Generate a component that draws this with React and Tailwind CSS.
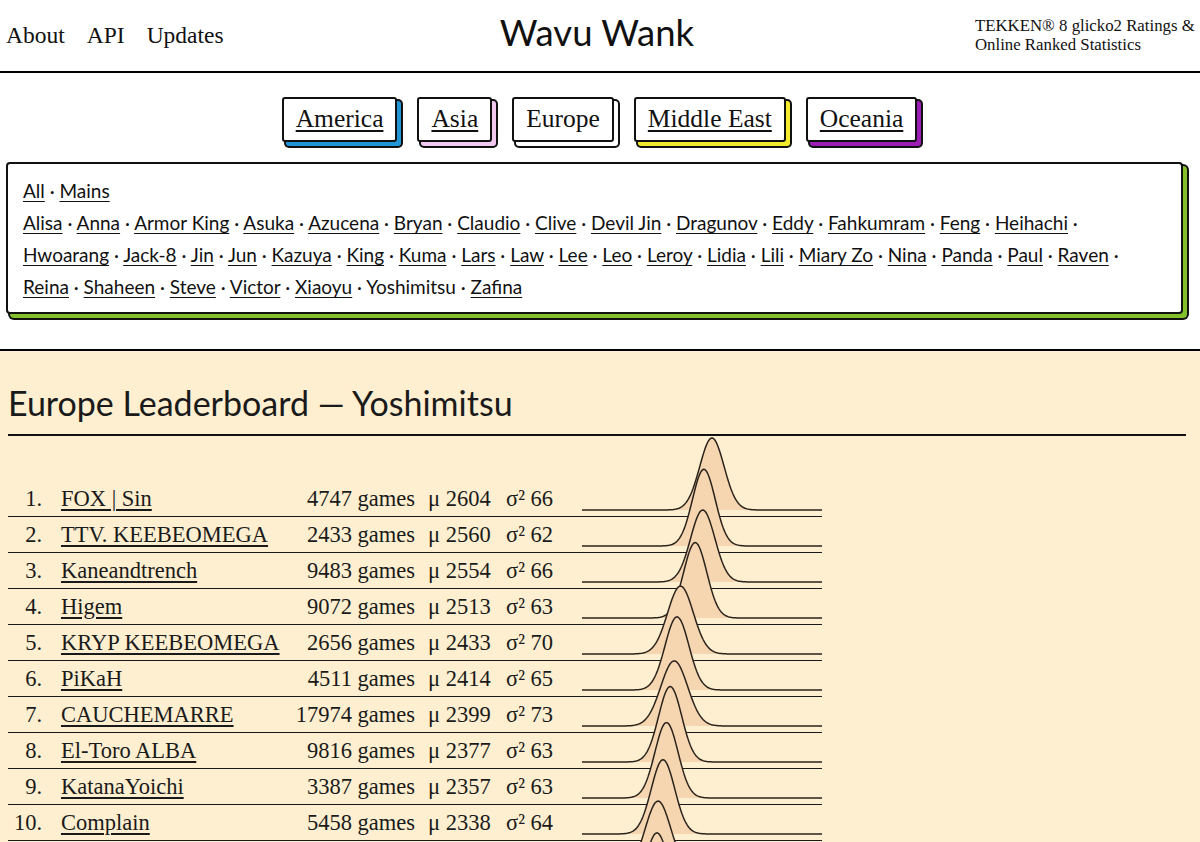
import React from 'react';

const serif = { fontFamily: '"Liberation Serif", "DejaVu Serif", serif' };
const sans = { fontFamily: 'Lato, "Open Sans", sans-serif' };

const regions = [
  { name: 'America', shadow: 'shadow-[4px_4px_0_0_#2196d6,4px_4px_0_2px_#111]', link: true },
  { name: 'Asia', shadow: 'shadow-[4px_4px_0_0_#f0c8f0,4px_4px_0_2px_#111]', link: true },
  { name: 'Europe', shadow: 'shadow-[4px_4px_0_0_#ffffff,4px_4px_0_2px_#111]', link: false },
  { name: 'Middle East', shadow: 'shadow-[4px_4px_0_0_#f4ea2e,4px_4px_0_2px_#111]', link: true },
  { name: 'Oceania', shadow: 'shadow-[4px_4px_0_0_#9b1db5,4px_4px_0_2px_#111]', link: true },
];

const charLines = [
  ['All', 'Mains'],
  ['Alisa', 'Anna', 'Armor King', 'Asuka', 'Azucena', 'Bryan', 'Claudio', 'Clive', 'Devil Jin', 'Dragunov', 'Eddy', 'Fahkumram', 'Feng', 'Heihachi', ''],
  ['Hwoarang', 'Jack-8', 'Jin', 'Jun', 'Kazuya', 'King', 'Kuma', 'Lars', 'Law', 'Lee', 'Leo', 'Leroy', 'Lidia', 'Lili', 'Miary Zo', 'Nina', 'Panda', 'Paul', 'Raven', ''],
  ['Reina', 'Shaheen', 'Steve', 'Victor', 'Xiaoyu', 'Yoshimitsu', 'Zafina'],
];

const players = [
  { name: 'FOX | Sin', games: 4747, mu: 2604, sigma: 66 },
  { name: 'TTV. KEEBEOMEGA', games: 2433, mu: 2560, sigma: 62 },
  { name: 'Kaneandtrench', games: 9483, mu: 2554, sigma: 66 },
  { name: 'Higem', games: 9072, mu: 2513, sigma: 63 },
  { name: 'KRYP KEEBEOMEGA', games: 2656, mu: 2433, sigma: 70 },
  { name: 'PiKaH', games: 4511, mu: 2414, sigma: 65 },
  { name: 'CAUCHEMARRE', games: 17974, mu: 2399, sigma: 73 },
  { name: 'El-Toro ALBA', games: 9816, mu: 2377, sigma: 63 },
  { name: 'KatanaYoichi', games: 3387, mu: 2357, sigma: 63 },
  { name: 'Complain', games: 5458, mu: 2338, sigma: 64 },
  { name: 'Yoshi Main', games: 6120, mu: 2311, sigma: 69 },
  { name: 'Manji', games: 3904, mu: 2305, sigma: 65 },
];

// ridgeline curve for one row, baseline sits 7px above the row's bottom rule
function Ridge({ mu, sigma }) {
  const base = 29;
  const cx = 81 + (mu - 2338) * 0.184;
  const s = sigma * 0.184;
  const h = 4752 / sigma;
  const pts = [];
  for (let x = 0; x <= 240; x += 1) {
    const y = base - h * Math.exp(-0.5 * ((x - cx) / s) ** 2);
    pts.push(`${x},${y.toFixed(2)}`);
  }
  const line = 'M' + pts.join(' L');
  return (
    <svg width="240" height="36" viewBox="0 0 240 36" className="block overflow-visible">
      <path d={`${line} L240,${base} L0,${base} Z`} fill="#f6d5b1" />
      <path d={line} fill="none" stroke="#2b241c" strokeWidth="1.5" />
    </svg>
  );
}

function Header() {
  return (
    <header className="grid grid-cols-[1fr_auto_1fr] items-center h-[73px] border-b-2 border-black bg-white text-[#111]">
      <nav className="flex gap-[22px] pl-[6px] text-[23.5px]" style={serif}>
        <a>About</a>
        <a>API</a>
        <a>Updates</a>
      </nav>
      <div className="text-[36.5px] leading-none pb-[6px] pr-[6px]" style={sans}>Wavu Wank</div>
      <div className="flex justify-end pr-[5px]">
        <p className="text-[16.8px] leading-[19px] w-[220px] pb-[2px]" style={serif}>
          TEKKEN® 8 glicko2 Ratings &amp; Online Ranked Statistics
        </p>
      </div>
    </header>
  );
}

function RegionTabs() {
  return (
    <div className="flex justify-center gap-[20px] pt-[24px] pr-[1px]" style={serif}>
      {regions.map((r) => (
        <div
          key={r.name}
          className={`h-[45px] px-[12px] flex items-center bg-white border-2 border-[#111] rounded-[3px] text-[25.5px] text-[#111] ${r.shadow}`}
        >
          <span className={r.link ? 'underline underline-offset-[3px] decoration-[1.5px]' : ''}>{r.name}</span>
        </div>
      ))}
    </div>
  );
}

function CharacterBox() {
  return (
    <div className="ml-[6px] mr-[17px] mt-[20px] bg-white border-2 border-[#111] rounded-[4px] shadow-[4px_4px_0_0_#84bf2c,4px_4px_0_2px_#111] pl-[15px] pt-[11px] pb-[9px] text-[19px] leading-[32px] text-[#111]" style={sans}>
      {charLines.map((line, i) => (
        <div key={i} className="whitespace-nowrap">
          {line.map((c, j) => (
            <React.Fragment key={j}>
              {j > 0 && <span> · </span>}
              {c === 'Yoshimitsu' ? (
                <span>{c}</span>
              ) : (
                c && <a className="underline underline-offset-[3px]">{c}</a>
              )}
            </React.Fragment>
          ))}
        </div>
      ))}
    </div>
  );
}

function Leaderboard() {
  return (
    <section className="mt-[35px] border-t-2 border-black bg-[#fdefd0] pl-[8px] pr-[14px] pb-[40px] text-[#1a1a1a]">
      <h2 className="pt-[32px] pb-[11px] border-b-2 border-[#111] text-[34px] leading-[40px]" style={sans}>
        Europe Leaderboard — Yoshimitsu
      </h2>
      <ol className="mt-[45px] w-[814px] text-[22.5px]" style={serif}>
        {players.map((p, i) => (
          <li key={i} className="flex items-center h-[36px] border-b-[1.5px] border-[#1a1a1a]">
            <span className="w-[34px] text-right">{i + 1}.</span>
            <a className="ml-[19px] w-[219px] underline underline-offset-[3px] decoration-[1.5px] whitespace-nowrap">{p.name}</a>
            <span className="w-[135px] text-right whitespace-nowrap">{p.games} games</span>
            <span className="ml-[13px] w-[68px] whitespace-nowrap">μ {p.mu}</span>
            <span className="ml-[10px] w-[54px] whitespace-nowrap">σ² {p.sigma}</span>
            <span className="ml-[22px] w-[240px] self-start">
              <Ridge mu={p.mu} sigma={p.sigma} />
            </span>
          </li>
        ))}
      </ol>
    </section>
  );
}

export default function App() {
  return (
    <div className="min-h-screen bg-white">
      <Header />
      <RegionTabs />
      <CharacterBox />
      <Leaderboard />
    </div>
  );
}
